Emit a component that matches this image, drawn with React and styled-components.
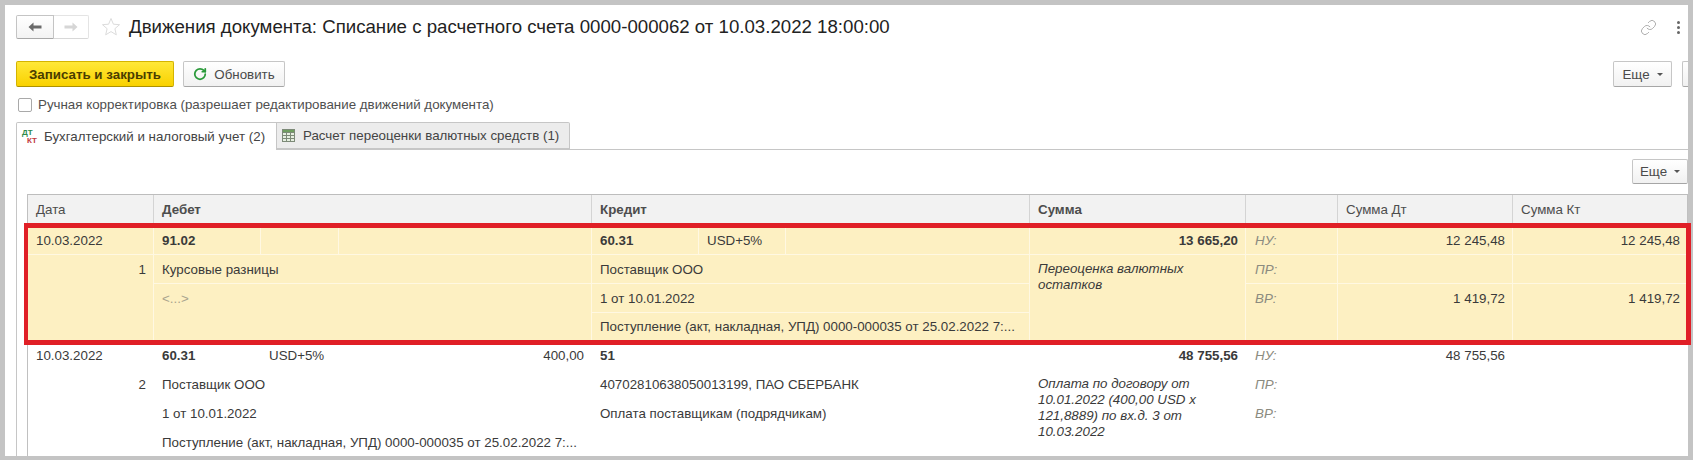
import React from 'react';
import styled, { createGlobalStyle } from 'styled-components';
import { Link, RotateCw } from 'lucide-react';

const GlobalStyle = createGlobalStyle`
  html, body {
    margin: 0;
    height: 460px;
    overflow: hidden;
    background: #c4c4c4;
  }
  * {
    box-sizing: border-box;
  }
`;

const Page = styled.div`
  padding: 5px 5px 4px;
  height: 460px;
  font-family: 'Liberation Sans', Arial, sans-serif;
  font-size: 13.33px;
  color: #3a3a3a;
`;

const Form = styled.div`
  height: 451px;
  padding: 10px 0 0 11px;
  background: #fff;
  display: flex;
  flex-direction: column;
  overflow-y: clip;
`;

const TitleBar = styled.header`
  display: flex;
  align-items: center;
  height: 24px;
`;

const NavGroup = styled.div`
  display: flex;
  width: 73px;
  height: 24px;
`;

const NavButton = styled.button`
  flex: ${props => (props.$active ? '0 0 38px' : '1')};
  padding: 0;
  display: flex;
  align-items: center;
  justify-content: center;
  background: ${props => (props.$active ? 'linear-gradient(#fff, #f3f3f3)' : '#fff')};
  border: 1px solid ${props => (props.$active ? '#c4c4c4' : '#e4e4e4')};
  border-bottom-color: ${props => (props.$active ? '#a8a8a8' : '#d8d8d8')};
  border-radius: ${props => (props.$active ? '2px 0 0 2px' : '0 2px 2px 0')};
  border-left-width: ${props => (props.$active ? '1px' : '0')};
`;

const Star = styled.svg`
  margin: 0 8px 0 12px;
  flex: none;
`;

const Title = styled.h1`
  margin: 0;
  font-size: 18.66px;
  font-weight: normal;
  color: #222;
  white-space: nowrap;
`;

const TitleTools = styled.div`
  margin-left: auto;
  display: flex;
  align-items: center;
  gap: 20px;
  padding-right: 8px;
  color: #8f8f8f;
`;

const Dots = styled.span`
  display: flex;
  flex-direction: column;
  gap: 2px;

  i {
    width: 3px;
    height: 3px;
    background: #666;
    border-radius: 50%;
  }
`;

const Toolbar = styled.div`
  margin-top: 22px;
  display: flex;
  align-items: center;
  gap: 9px;
  height: 26px;
`;

const Button = styled.button`
  display: flex;
  align-items: center;
  justify-content: center;
  gap: 7px;
  height: ${props => props.$height || 26}px;
  width: ${props => props.$width}px;
  padding: 0;
  font: inherit;
  color: #4a4a4a;
  background: linear-gradient(#fff, #f1f1f1);
  border: 1px solid #c6c6c6;
  border-bottom-color: #a6a6a6;
  border-radius: 2px;
`;

const PrimaryButton = styled(Button)`
  color: #4a3d00;
  font-weight: bold;
  background: linear-gradient(#ffe838, #f9d100);
  border-color: #d4b400;
  border-bottom-color: #ad9200;
`;

const ClippedButton = styled(Button)`
  border-right: 0;
  border-radius: 2px 0 0 2px;
`;

const ToolbarEnd = styled.div`
  margin-left: auto;
  display: flex;
  gap: 10px;
`;

const Caret = styled.span`
  width: 0;
  height: 0;
  border: 3px solid transparent;
  border-top: 3px solid #555;
  border-bottom: 0;
`;

const CheckRow = styled.label`
  margin-top: 10px;
  height: 16px;
  display: flex;
  align-items: center;
  gap: 6px;
  padding-left: 2px;
  color: #4f4f4f;
`;

const CheckBox = styled.span`
  width: 14px;
  height: 14px;
  border: 1px solid #a9a9a9;
  border-radius: 2px;
  background: #fff;
`;

const Tabs = styled.div`
  margin-top: 10px;
  height: 28px;
  display: flex;
  position: relative;
  z-index: 1;
`;

const Tab = styled.div`
  width: ${props => props.$width}px;
  height: ${props => (props.$active ? 28 : 27)}px;
  display: flex;
  align-items: center;
  background: ${props => (props.$active ? '#fff' : '#ececec')};
  border: 1px solid #c6c6c6;
  border-bottom: ${props => (props.$active ? '0' : '1px solid #c6c6c6')};
  border-left: ${props => (props.$active ? '1px solid #c6c6c6' : '0')};
  border-radius: ${props => (props.$active ? '2px 0 0 0' : '0 2px 0 0')};
  color: #444;
  white-space: nowrap;
`;

const DtKt = styled.span`
  width: 16px;
  margin: 0 6px 0 5px;
  display: flex;
  flex-direction: column;
  font-size: 8px;
  line-height: 8px;

  b:first-child {
    color: #2b8a4a;
  }
  b:last-child {
    color: #c0393b;
    padding-left: 5px;
  }
`;

const GridIcon = styled.svg`
  margin: 0 8px 0 5px;
  flex: none;
`;

const Panel = styled.section`
  margin-top: -1px;
  flex: 1;
  padding: 9px 0 0 10px;
  border-top: 1px solid #c6c6c6;
  border-left: 1px solid #c6c6c6;
`;

const PanelBar = styled.div`
  display: flex;
  justify-content: flex-end;
  height: 25px;
`;

const Table = styled.div`
  margin-top: 10px;
  border-left: 1px solid #c0c0c0;
`;

const COLUMNS = '126px 438px 438px 216px 92px 175px 175px';

const HeadRow = styled.div`
  display: grid;
  grid-template-columns: ${COLUMNS};
  height: 29px;
  background: #f2f2f2;
  border-top: 1px solid #bdbdbd;
`;

const HeadCell = styled.div`
  display: flex;
  align-items: center;
  padding: 0 8px;
  border-right: 1px solid ${props => (props.$last ? '#c0c0c0' : '#d4d4d4')};
  font-weight: ${props => (props.$bold ? 'bold' : 'normal')};
  color: #4d4d4d;
`;

const Record = styled.div`
  position: relative;
  z-index: ${props => (props.$selected ? 1 : 0)};
  display: grid;
  grid-template-columns: ${COLUMNS};
  grid-template-rows: ${props => (props.$selected ? '29px 29px 29px 28px' : 'repeat(4, 29px)')};
  padding-top: ${props => (props.$selected ? 3 : 0)}px;
  background: ${props => (props.$selected ? '#fdf0c2' : '#fff')};
  --grid-line: ${props => (props.$selected ? '#fff8e2' : 'transparent')};
`;

const Highlight = styled.div`
  position: absolute;
  inset: 0 -3px -4px -4px;
  border: 5px solid #e01f26;
  border-left-width: 4px;
  pointer-events: none;
`;

const Cell = styled.div`
  grid-column: ${props => props.$col};
  grid-row: ${props => props.$row} / span ${props => props.$span || 1};
  display: flex;
  align-items: ${props => (props.$span > 1 ? 'flex-start' : 'center')};
  justify-content: ${props => (props.$right ? 'flex-end' : 'flex-start')};
  padding: ${props => (props.$span > 1 ? '7px 7px 0 8px' : '0 7px 0 8px')};
  white-space: nowrap;
  overflow: hidden;
  border-right: 1px solid var(--grid-line);
  border-bottom: 1px solid var(--grid-line);
  color: ${props => (props.$muted ? '#a9a48e' : 'inherit')};
  font-weight: ${props => (props.$bold ? 'bold' : 'normal')};
`;

const TaxLabel = styled(Cell)`
  color: #8b8b80;
  padding-left: 9px;
  font-style: italic;
`;

const NoteCell = styled(Cell)`
  display: block;
  padding: 6px 8px 0;
  white-space: normal;
  font-style: italic;
  line-height: 16px;
`;

const SubRow = styled.div`
  grid-column: ${props => props.$col};
  grid-row: 1;
  display: grid;
  grid-template-columns: ${props => props.$widths};
`;

const rows = [
  {
    selected: true,
    number: 1,
    debit: { code: '91.02', lines: ['Курсовые разницы'], muted: '<...>', widths: '107px 78px 1fr' },
    credit: {
      code: '60.31',
      currency: 'USD+5%',
      lines: ['Поставщик ООО', '1 от 10.01.2022', 'Поступление (акт, накладная, УПД) 0000-000035 от 25.02.2022 7:...'],
      widths: '107px 87px 1fr',
    },
    sum: '13 665,20',
    note: 'Переоценка валютных остатков',
    dt: ['12 245,48', '', '1 419,72'],
    kt: ['12 245,48', '', '1 419,72'],
  },
  {
    number: 2,
    debit: {
      code: '60.31',
      currency: 'USD+5%',
      amount: '400,00',
      lines: ['Поставщик ООО', '1 от 10.01.2022', 'Поступление (акт, накладная, УПД) 0000-000035 от 25.02.2022 7:...'],
      widths: '107px 78px 1fr',
    },
    credit: {
      code: '51',
      lines: ['40702810638050013199, ПАО СБЕРБАНК', 'Оплата поставщикам (подрядчикам)'],
      widths: '107px 87px 1fr',
    },
    sum: '48 755,56',
    note: 'Оплата по договору от 10.01.2022 (400,00 USD x 121,8889) по вх.д. 3 от 10.03.2022',
    dt: ['48 755,56', '', ''],
    kt: ['', '', ''],
  },
];

const TAX = ['НУ:', 'ПР:', 'ВР:'];

const Account = ({ col, data }) => (
  <>
    <SubRow $col={col} $widths={data.widths}>
      <Cell $bold>{data.code}</Cell>
      <Cell>{data.currency}</Cell>
      <Cell $right>{data.amount}</Cell>
    </SubRow>
    {data.lines.map((line, i) => (
      <Cell key={i} $col={col} $row={i + 2}>
        {line}
      </Cell>
    ))}
    {data.muted && (
      <Cell $col={col} $row={3} $span={2} $muted>
        {data.muted}
      </Cell>
    )}
  </>
);

const Row = ({ data }) => (
  <Record $selected={data.selected}>
    <Cell $col={1} $row={1}>
      10.03.2022
    </Cell>
    <Cell $col={1} $row={2} $span={3} $right>
      {data.number}
    </Cell>
    <Account col={2} data={data.debit} />
    <Account col={3} data={data.credit} />
    <Cell $col={4} $row={1} $right $bold>
      {data.sum}
    </Cell>
    <NoteCell $col={4} $row={2} $span={3}>
      {data.note}
    </NoteCell>
    {TAX.map((label, i) => (
      <React.Fragment key={label}>
        <TaxLabel $col={5} $row={i + 1} $span={i === 2 ? 2 : 1}>
          {label}
        </TaxLabel>
        <Cell $col={6} $row={i + 1} $span={i === 2 ? 2 : 1} $right>
          {data.dt[i]}
        </Cell>
        <Cell $col={7} $row={i + 1} $span={i === 2 ? 2 : 1} $right>
          {data.kt[i]}
        </Cell>
      </React.Fragment>
    ))}
    {data.selected && <Highlight />}
  </Record>
);

const Arrow = ({ color, flip }) => (
  <svg width="14" height="10" viewBox="0 0 14 10" style={flip ? { transform: 'scaleX(-1)' } : undefined}>
    <path d="M0.5 5 L5.5 0.5 V3.5 H13.5 V6.5 H5.5 V9.5 Z" fill={color} />
  </svg>
);

const App = () => (
  <Page>
    <GlobalStyle />
    <Form>
      <TitleBar>
        <NavGroup>
          <NavButton $active>
            <Arrow color="#6a6a6a" />
          </NavButton>
          <NavButton>
            <Arrow color="#d6d6d6" flip />
          </NavButton>
        </NavGroup>
        <Star width="20" height="20" viewBox="0 0 20 20">
          <path
            d="M10 1.5 L12.4 7.2 L18.5 7.7 L13.9 11.7 L15.3 17.8 L10 14.6 L4.7 17.8 L6.1 11.7 L1.5 7.7 L7.6 7.2 Z"
            fill="none"
            stroke="#dcdcdc"
          />
        </Star>
        <Title>Движения документа: Списание с расчетного счета 0000-000062 от 10.03.2022 18:00:00</Title>
        <TitleTools>
          <Link size={17} strokeWidth={1} />
          <Dots>
            <i />
            <i />
            <i />
          </Dots>
        </TitleTools>
      </TitleBar>

      <Toolbar>
        <PrimaryButton $width={158}>Записать и закрыть</PrimaryButton>
        <Button $width={102}>
          <RotateCw size={14} color="#2a9a3a" strokeWidth={3} />
          Обновить
        </Button>
        <ToolbarEnd>
          <Button $width={59}>
            Еще
            <Caret />
          </Button>
          <ClippedButton $width={6} />
        </ToolbarEnd>
      </Toolbar>

      <CheckRow>
        <CheckBox />
        Ручная корректировка (разрешает редактирование движений документа)
      </CheckRow>

      <Tabs>
        <Tab $active $width={261}>
          <DtKt>
            <b>ДТ</b>
            <b>КТ</b>
          </DtKt>
          Бухгалтерский и налоговый учет (2)
        </Tab>
        <Tab $width={293}>
          <GridIcon width="13" height="13" viewBox="0 0 13 13">
            <rect x="0.5" y="0.5" width="12" height="12" fill="#e6efe0" stroke="#7d8a78" />
            <path d="M0.5 3.5H12.5M0.5 6.5H12.5M0.5 9.5H12.5M4.5 0.5V12.5M8.5 0.5V12.5" stroke="#7d8a78" />
            <rect x="1" y="1" width="11" height="2" fill="#6f9e5f" />
          </GridIcon>
          Расчет переоценки валютных средств (1)
        </Tab>
      </Tabs>

      <Panel>
        <PanelBar>
          <Button $width={56} $height={25}>
            Еще
            <Caret />
          </Button>
        </PanelBar>
        <Table>
          <HeadRow>
            <HeadCell>Дата</HeadCell>
            <HeadCell $bold>Дебет</HeadCell>
            <HeadCell $bold>Кредит</HeadCell>
            <HeadCell $bold>Сумма</HeadCell>
            <HeadCell />
            <HeadCell>Сумма Дт</HeadCell>
            <HeadCell $last>Сумма Кт</HeadCell>
          </HeadRow>
          {rows.map(row => (
            <Row key={row.number} data={row} />
          ))}
        </Table>
      </Panel>
    </Form>
  </Page>
);

export default App;
